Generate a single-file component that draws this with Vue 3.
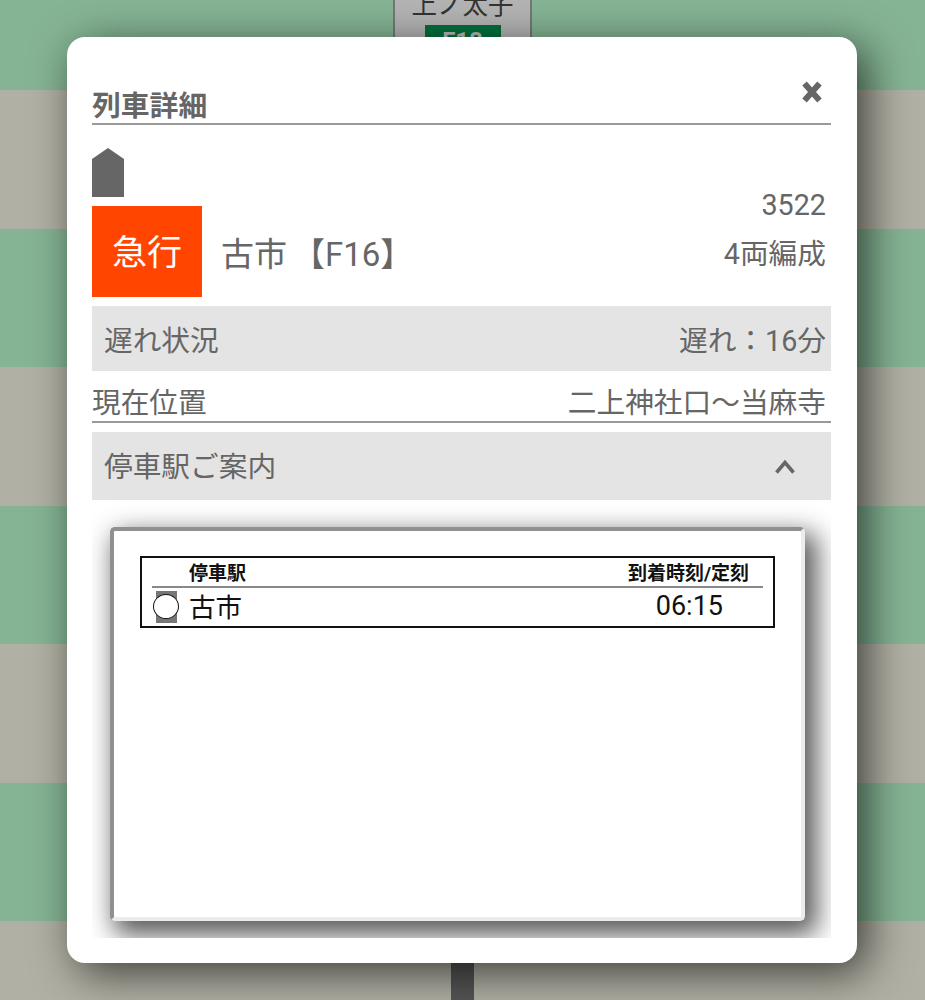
<template>
  <div class="page">
    <div class="bands">
      <div v-for="n in 8" :key="n" :class="['band', n % 2 ? 'green' : 'gray']" :style="{ height: bandHeights[n - 1] + 'px' }"></div>
    </div>

    <div class="sign">
      <div class="sign-name">上ノ太子</div>
      <div class="sign-code">F18</div>
    </div>
    <div class="pole"></div>

    <div class="overlay">
      <div class="modal">
        <div class="modal-head">
          <h2>列車詳細</h2>
          <svg class="close" viewBox="0 0 24 24" width="24" height="24">
            <path d="M4.5 3.5 L19.5 20.5 M19.5 3.5 L4.5 20.5" stroke="#666" stroke-width="6" fill="none" />
          </svg>
        </div>

        <div class="direction">
          <svg viewBox="0 0 32 49" width="32" height="49">
            <path d="M0 49 V11 L16 0 L32 11 V49 Z" fill="#666" />
          </svg>
        </div>

        <div class="train">
          <div class="kind">急行</div>
          <div class="dest">古市<span class="bracket open">【</span>F16<span class="bracket">】</span></div>
          <div class="train-info">
            <div>3522</div>
            <div>4両編成</div>
          </div>
        </div>

        <div class="row shaded delay">
          <span>遅れ状況</span>
          <span>遅れ：16分</span>
        </div>

        <div class="row position">
          <span>現在位置</span>
          <span>二上神社口〜当麻寺</span>
        </div>

        <div class="row shaded stops-head">
          <span>停車駅ご案内</span>
          <svg class="chevron" viewBox="0 0 20 14" width="20" height="14">
            <path d="M1.5 12.5 L10 2.5 L18.5 12.5" stroke="#666" stroke-width="3.6" fill="none" />
          </svg>
        </div>

        <div class="stops-panel">
          <div class="stops-card">
            <div class="stops-table">
              <div class="stops-title">
                <span>停車駅</span>
                <span>到着時刻/定刻</span>
              </div>
              <div v-for="s in stops" :key="s.name" class="stop">
                <span class="marker"><i></i></span>
                <span class="stop-name">{{ s.name }}</span>
                <span class="stop-time">{{ s.time }}</span>
              </div>
            </div>
          </div>
        </div>
      </div>
    </div>
  </div>
</template>

<script setup>
const bandHeights = [90, 139, 138, 139, 138, 139, 138, 79]
const stops = [{ name: '古市', time: '06:15' }]
</script>

<style scoped>
.page {
  position: relative;
  width: 925px;
  height: 1000px;
  overflow: hidden;
  font-family: Roboto, "Noto Sans CJK JP", sans-serif;
  color: #666;
  text-spacing-trim: space-all;
}
.band.green { background: #85b494; }
.band.gray { background: #b0b0a4; }

.sign {
  position: absolute;
  left: 393px;
  top: -22px;
  width: 139px;
  height: 90px;
  box-sizing: border-box;
  border: 2px solid #777;
  background: #b4b4b4;
  text-align: center;
}
.sign-name {
  font-size: 25.5px;
  line-height: 36px;
  color: #333;
  margin-top: 7px;
}
.sign-code {
  width: 76px;
  margin: 2px auto 0;
  background: #00703c;
  color: #bbb;
  font-size: 24px;
  font-weight: 700;
  line-height: 30px;
  padding-top: 1px;
}
.pole {
  position: absolute;
  left: 451px;
  top: 950px;
  width: 23px;
  height: 50px;
  background: #555;
}

.overlay {
  position: absolute;
  inset: 0;
  display: flex;
  justify-content: center;
  align-items: flex-start;
  padding-top: 37px;
}
.modal {
  width: 790px;
  height: 926px;
  box-sizing: border-box;
  padding: 0 26px 0 25px;
  margin-left: -1px;
  background: #fff;
  border-radius: 18px;
  box-shadow: 10px 10px 44px rgba(0, 0, 0, .65);
}

.modal-head {
  display: flex;
  justify-content: space-between;
  height: 88px;
  box-sizing: border-box;
  border-bottom: 2px solid #999;
  position: relative;
}
h2 {
  margin: 0 0 -3px;
  align-self: flex-end;
  font-size: 28.8px;
  line-height: 40px;
  font-weight: 700;
}
.close {
  position: absolute;
  right: 7px;
  top: 43px;
}

.direction {
  height: 49px;
  margin-top: 23px;
}
.direction svg { display: block; }

.train {
  display: flex;
  align-items: center;
  height: 91px;
  margin-top: 9px;
}
.kind {
  width: 110px;
  height: 91px;
  background: #ff4500;
  color: #fff;
  font-size: 35px;
  line-height: 96px;
  text-align: center;
}
.dest {
  margin: 4px 0 0 19px;
  font-size: 33px;
  line-height: 91px;
}
.bracket {
  display: inline-block;
  width: 33px;
  font-family: "Noto Sans CJK JP", sans-serif;
}
.bracket.open {
  width: 38px;
  text-align: right;
}
.train-info {
  margin: -44px 0 0 auto;
  padding-right: 5px;
  text-align: right;
  font-size: 28.7px;
  line-height: 49px;
}

.row {
  display: flex;
  justify-content: space-between;
  align-items: center;
  font-size: 28.7px;
}
.shaded {
  background: #e4e4e4;
  padding: 0 5px 0 12px;
}
.delay {
  height: 65px;
  margin-top: 9px;
}
.position {
  height: 52px;
  box-sizing: border-box;
  padding: 9px 5px 0 0;
  border-bottom: 2px solid #999;
}
.stops-head {
  height: 68px;
  box-sizing: border-box;
  margin-top: 9px;
  padding-right: 36px;
  padding-bottom: 4px;
}
.chevron {
  margin-top: 6px;
}

.stops-panel {
  height: 438px;
  box-sizing: border-box;
  padding: 27px 26px 0 18px;
  overflow: hidden;
}
.stops-card {
  height: 394px;
  box-sizing: border-box;
  padding: 25px 26px 0 26px;
  background: #fff;
  border-style: solid;
  border-width: 4px;
  border-color: #909090 #ececec #ececec #909090;
  border-radius: 5px;
  box-shadow: 8px 10px 26px 4px rgba(0, 0, 0, .65);
}
.stops-table {
  height: 72px;
  box-sizing: border-box;
  border: 2px solid #111;
  padding: 0 10px;
  color: #111;
}
.stops-title {
  display: flex;
  justify-content: space-between;
  height: 30px;
  box-sizing: border-box;
  padding: 2px 14px 0 37px;
  border-bottom: 2px solid #888;
  font-size: 19px;
  font-weight: 700;
  line-height: 28px;
}
.stop {
  display: flex;
  align-items: center;
  height: 38px;
}
.marker {
  position: relative;
  width: 21px;
  height: 32px;
  margin-left: 4px;
  background: #777;
}
.marker i {
  position: absolute;
  left: -3px;
  top: 3px;
  width: 26px;
  height: 25px;
  box-sizing: border-box;
  background: #fff;
  border: 1.5px solid #111;
  border-radius: 50%;
}
.stop-name {
  margin: -4px 0 0 12px;
  font-size: 26.5px;
}
.stop-time {
  margin: -2px 40px 0 auto;
  font-size: 27px;
}
</style>

<style>
html, body { margin: 0; background: #b0b0a4; }
</style>
